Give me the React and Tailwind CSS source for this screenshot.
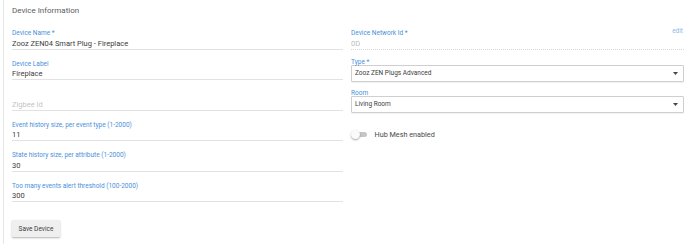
import React from 'react';

const font = { fontFamily: 'Roboto, "Noto Sans", sans-serif' };

function TextField({ label, value, placeholder, muted = false, dotted = false, extra }) {
  return (
    <div className="mb-[11.1px]">
      <div className="flex h-[7px] items-start justify-between text-[6.5px] leading-[7px] text-[#4a90dc]">
        <span>{label}</span>
        {extra}
      </div>
      <div
        className={`mt-[1.5px] h-[11px] text-[7.5px] leading-[10px] ${
          dotted ? 'border-b border-dotted border-[#d6d6d6]' : 'border-b border-[#e2e2e2]'
        } ${value ? (muted ? 'text-[#bdbdbd]' : 'text-[#3c3c3c]') : 'text-[#c4c4c4]'}`}
      >
        {value || placeholder}
      </div>
    </div>
  );
}

function SelectField({ label, value, className = '' }) {
  return (
    <div className={className}>
      <div className="h-[6px] text-[6.5px] leading-[6px] text-[#4a90dc]">{label}</div>
      <div className="flex h-[16.5px] items-center justify-between rounded-[1px] border border-[#cfcfcf] pl-[3px] pr-[5px] shadow-[0_1px_1px_rgba(0,0,0,0.06)]">
        <span className="text-[6.5px] leading-[8px] text-[#3c3c3c]">{value}</span>
        <svg width="5" height="3" viewBox="0 0 5 3">
          <path d="M0 0 L5 0 L2.5 3 Z" fill="#444" />
        </svg>
      </div>
    </div>
  );
}

function Toggle({ label }) {
  return (
    <div className="flex h-[10px] items-center">
      <div className="relative h-[10px] w-[17px]">
        <div className="absolute left-[2px] top-[2.5px] h-[5px] w-[14px] rounded-full bg-[#c6c6c6]" />
        <div className="absolute left-0 top-[0.5px] h-[9px] w-[9px] rounded-full bg-[#fafafa] shadow-[0_1px_2px_rgba(0,0,0,0.35)]" />
      </div>
      <span className="ml-[6.5px] text-[7.25px] leading-[10px] text-[#4a4a4a]">{label}</span>
    </div>
  );
}

export default function App() {
  return (
    <div className="h-[244px] w-[690px] overflow-hidden bg-white" style={font}>
      <div className="ml-[3px] h-full border-l border-[#e6e6e6] pl-[8px] pr-[6px]">
        <div className="pt-[5px] text-[8px] leading-[12px] text-[#5c5c5c]">Device Information</div>

        <div className="mt-[13px] flex gap-x-[8px]">
          <div className="w-[331px]">
            <TextField label="Device Name *" value="Zooz ZEN04 Smart Plug - Fireplace" />
            <TextField label="Device Label" value="Fireplace" />
            <TextField label="" placeholder="Zigbee Id" />
            <TextField label="Event history size, per event type (1-2000)" value="11" />
            <TextField label="State history size, per attribute (1-2000)" value="30" />
            <TextField label="Too many events alert threshold (100-2000)" value="300" />
            <button className="mt-[4px] h-[16.5px] w-[48px] rounded-[1px] bg-[#efefef] text-[6.5px] leading-[16px] text-[#3c3c3c] shadow-[0_1px_2px_rgba(0,0,0,0.3)]">
              Save Device
            </button>
          </div>

          <div className="w-[333px]">
            <TextField
              label="Device Network Id *"
              value="0D"
              muted
              dotted
              extra={<span className="-mt-[2.5px] mr-[1px] text-[#8fb8e8]">edit</span>}
            />
            <SelectField className="-mt-[1.6px]" label="Type *" value="Zooz ZEN Plugs Advanced" />
            <SelectField className="mt-[8.7px]" label="Room" value="Living Room" />
            <div className="mt-[17.3px]">
              <Toggle label="Hub Mesh enabled" />
            </div>
          </div>
        </div>
      </div>
    </div>
  );
}
